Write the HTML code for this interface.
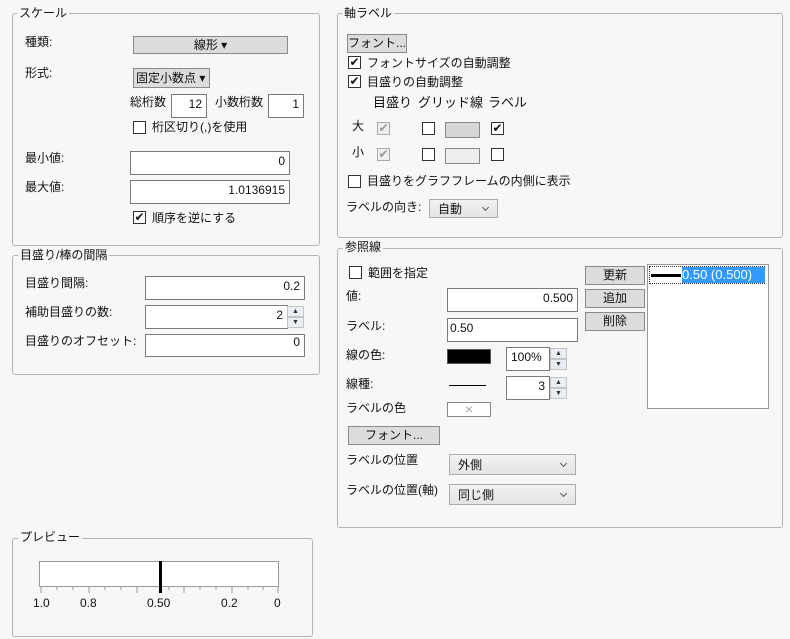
<!DOCTYPE html>
<html><head><meta charset="utf-8"><style>
body{margin:0;width:790px;height:639px;background:#f7f7f7;font-family:"Liberation Sans","Noto Sans CJK JP",sans-serif;font-size:12px;color:#111;position:relative;overflow:hidden}
.a{position:absolute;white-space:nowrap;line-height:14px}
.g{position:absolute;border:1px solid #b4b4b4;border-radius:3px}
.t{position:absolute;background:#f7f7f7;padding:0 2px;line-height:14px}
.in{position:absolute;background:#fff;border:1px solid #7a7a7a;box-sizing:border-box;text-align:right;padding:0 4px;line-height:18px}
.btn{position:absolute;background:#dcdcdc;border:1px solid #8a8a8a;box-sizing:border-box;text-align:center;line-height:16px}
.cb{position:absolute;width:13px;height:13px;border:1px solid #333;background:#fff;box-sizing:border-box;font-size:12px;line-height:11px;text-align:center}
.cb.d{border-color:#aaa;background:#eee;color:#999}
.dd{position:absolute;background:linear-gradient(#f2f2f2,#e4e4e4);border:1px solid #acacac;box-sizing:border-box;line-height:18px;padding-left:8px}
.dd:after{content:"";position:absolute;right:9px;top:50%;margin-top:-4px;width:4px;height:4px;border-right:1px solid #555;border-bottom:1px solid #555;transform:rotate(45deg)}
.sp{position:absolute;width:17px;border:1px solid #c4c4c4;box-sizing:border-box;background:#e8eef4;font-size:7px;text-align:center;line-height:10px;color:#333}
</style></head><body>
<div class="g" style="left:12px;top:13px;width:306px;height:231px"></div>
<div class="t" style="left:17px;top:6px">スケール</div>
<div class="a" style="left:25px;top:35px">種類:</div>
<div class="btn" style="left:133px;top:36px;width:155px;height:18px">線形 ▾</div>
<div class="a" style="left:25px;top:66px">形式:</div>
<div class="btn" style="left:133px;top:68px;width:77px;height:20px;line-height:18px;text-align:left;padding-left:2px">固定小数点 ▾</div>
<div class="a" style="left:130px;top:95px">総桁数</div>
<div class="in" style="left:171px;top:94px;width:36px;height:24px">12</div>
<div class="a" style="left:215px;top:95px">小数桁数</div>
<div class="in" style="left:268px;top:94px;width:36px;height:24px">1</div>
<div class="cb" style="left:133px;top:121px"></div>
<div class="a" style="left:152px;top:120px">桁区切り(,)を使用</div>
<div class="a" style="left:25px;top:151px">最小値:</div>
<div class="in" style="left:130px;top:151px;width:160px;height:24px">0</div>
<div class="a" style="left:25px;top:180px">最大値:</div>
<div class="in" style="left:130px;top:180px;width:160px;height:24px">1.0136915</div>
<div class="cb" style="left:133px;top:211px">✔</div>
<div class="a" style="left:152px;top:211px">順序を逆にする</div>
<div class="g" style="left:12px;top:255px;width:306px;height:118px"></div>
<div class="t" style="left:18px;top:248px">目盛り/棒の間隔</div>
<div class="a" style="left:25px;top:276px">目盛り間隔:</div>
<div class="in" style="left:145px;top:276px;width:160px;height:24px">0.2</div>
<div class="a" style="left:25px;top:305px">補助目盛りの数:</div>
<div class="in" style="left:145px;top:305px;width:143px;height:24px">2</div>
<div class="sp" style="left:287px;top:306px;height:11px">▲</div><div class="sp" style="left:287px;top:317px;height:11px">▼</div>
<div class="a" style="left:25px;top:334px">目盛りのオフセット:</div>
<div class="in" style="left:145px;top:334px;width:160px;height:23px;line-height:14px">0</div>
<div class="g" style="left:12px;top:538px;width:299px;height:97px"></div>
<div class="t" style="left:18px;top:530px">プレビュー</div>
<svg class="a" style="left:0;top:0" width="320" height="639">
<rect x="39.5" y="561.5" width="239" height="25" fill="#fff" stroke="#999"/>
<g stroke="#999">
<line x1="41" y1="587" x2="41" y2="593"/><line x1="57" y1="587" x2="57" y2="590"/><line x1="73" y1="587" x2="73" y2="590"/><line x1="89" y1="587" x2="89" y2="593"/><line x1="105" y1="587" x2="105" y2="590"/><line x1="121" y1="587" x2="121" y2="590"/><line x1="137" y1="587" x2="137" y2="593"/><line x1="169" y1="587" x2="169" y2="590"/><line x1="184" y1="587" x2="184" y2="593"/><line x1="200" y1="587" x2="200" y2="590"/><line x1="216" y1="587" x2="216" y2="590"/><line x1="232" y1="587" x2="232" y2="593"/><line x1="248" y1="587" x2="248" y2="590"/><line x1="263" y1="587" x2="263" y2="590"/><line x1="278" y1="587" x2="278" y2="593"/></g>
<rect x="159" y="561" width="3" height="32" fill="#000"/>
</svg>
<div class="a" style="left:33px;top:596px">1.0</div>
<div class="a" style="left:80px;top:596px">0.8</div>
<div class="a" style="left:147px;top:596px">0.50</div>
<div class="a" style="left:221px;top:596px">0.2</div>
<div class="a" style="left:274px;top:596px">0</div>
<div class="g" style="left:337px;top:13px;width:444px;height:223px"></div>
<div class="t" style="left:342px;top:6px">軸ラベル</div>
<div class="btn" style="left:347px;top:34px;width:60px;height:19px">フォント...</div>
<div class="cb" style="left:348px;top:56px">✔</div><div class="a" style="left:367px;top:56px">フォントサイズの自動調整</div>
<div class="cb" style="left:348px;top:75px">✔</div><div class="a" style="left:367px;top:75px">目盛りの自動調整</div>
<div class="a" style="left:373px;top:96px;font-size:13px">目盛り</div>
<div class="a" style="left:418px;top:96px;font-size:13px">グリッド線</div>
<div class="a" style="left:488px;top:96px;font-size:13px">ラベル</div>
<div class="a" style="left:352px;top:119px">大</div>
<div class="cb d" style="left:377px;top:122px">✔</div><div class="cb" style="left:422px;top:122px"></div>
<div class="a" style="left:445px;top:122px;width:33px;height:14px;border:1px solid #888;background:#d6d6d6"></div>
<div class="cb" style="left:491px;top:122px">✔</div>
<div class="a" style="left:352px;top:145px">小</div>
<div class="cb d" style="left:377px;top:148px">✔</div><div class="cb" style="left:422px;top:148px"></div>
<div class="a" style="left:445px;top:148px;width:33px;height:14px;border:1px solid #888;background:#eee"></div>
<div class="cb" style="left:491px;top:148px"></div>
<div class="cb" style="left:348px;top:175px"></div><div class="a" style="left:367px;top:174px">目盛りをグラフフレームの内側に表示</div>
<div class="a" style="left:346px;top:200px">ラベルの向き:</div>
<div class="dd" style="left:429px;top:199px;width:69px;height:19px">自動</div>
<div class="g" style="left:337px;top:248px;width:444px;height:278px"></div>
<div class="t" style="left:343px;top:240px">参照線</div>
<div class="cb" style="left:349px;top:266px"></div><div class="a" style="left:368px;top:266px">範囲を指定</div>
<div class="a" style="left:346px;top:289px">値:</div>
<div class="in" style="left:447px;top:288px;width:131px;height:24px">0.500</div>
<div class="a" style="left:346px;top:319px">ラベル:</div>
<div class="in" style="left:447px;top:318px;width:131px;height:24px;text-align:left;padding-left:2px">0.50</div>
<div class="a" style="left:346px;top:348px">線の色:</div>
<div class="a" style="left:447px;top:349px;width:42px;height:13px;background:#000;border:1px solid #555"></div>
<div class="in" style="left:506px;top:347px;width:44px;height:24px;text-align:left;padding-left:4px">100%</div>
<div class="sp" style="left:550px;top:348px;height:11px">▲</div><div class="sp" style="left:550px;top:359px;height:11px">▼</div>
<div class="a" style="left:346px;top:377px">線種:</div>
<div class="a" style="left:449px;top:385px;width:37px;height:1px;background:#000"></div>
<div class="in" style="left:506px;top:376px;width:44px;height:24px">3</div>
<div class="sp" style="left:550px;top:377px;height:11px">▲</div><div class="sp" style="left:550px;top:388px;height:11px">▼</div>
<div class="a" style="left:346px;top:401px">ラベルの色</div>
<div class="a" style="left:447px;top:402px;width:42px;height:13px;border:1px solid #888;background:#fff;color:#aaa;text-align:center;line-height:13px;font-size:14px">×</div>
<div class="btn" style="left:348px;top:426px;width:92px;height:19px">フォント...</div>
<div class="a" style="left:346px;top:453px">ラベルの位置</div>
<div class="dd" style="left:449px;top:454px;width:127px;height:21px;line-height:20px">外側</div>
<div class="a" style="left:346px;top:483px">ラベルの位置(軸)</div>
<div class="dd" style="left:449px;top:484px;width:127px;height:21px;line-height:20px">同じ側</div>
<div class="btn" style="left:585px;top:266px;width:60px;height:19px">更新</div>
<div class="btn" style="left:585px;top:289px;width:60px;height:19px">追加</div>
<div class="btn" style="left:585px;top:312px;width:60px;height:19px">削除</div>
<div class="a" style="left:647px;top:264px;width:120px;height:143px;border:1px solid #999;background:#fff"></div>
<div class="a" style="left:649px;top:266px;width:116px;height:18px;border:1px dotted #333;box-sizing:border-box"></div>
<div class="a" style="left:651px;top:274px;width:30px;height:3px;background:#000"></div>
<div class="a" style="left:682px;top:267px;width:83px;height:16px;background:#3399ff;color:#fff;font-size:13px;line-height:16px">0.50 (0.500)</div>
</body></html>
